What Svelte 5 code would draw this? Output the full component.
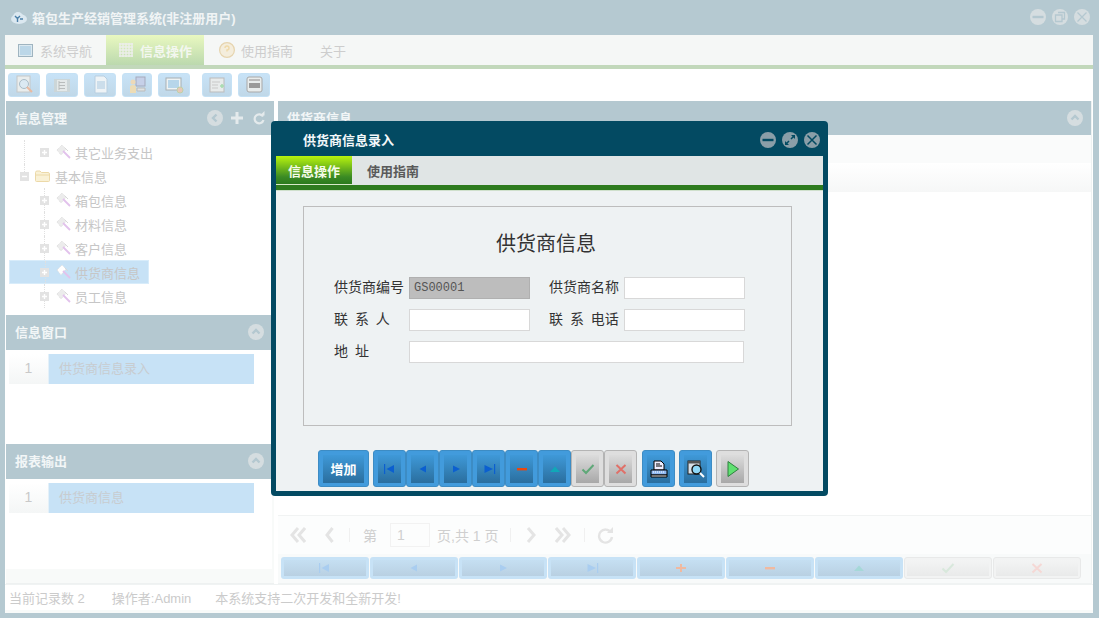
<script>
  const fullTree = [
    { label: '其它业务支出', level: 2, guide: true },
    { label: '基本信息', level: 1, folder: true },
    { label: '箱包信息', level: 2 },
    { label: '材料信息', level: 2 },
    { label: '客户信息', level: 2 },
    { label: '供货商信息', level: 2, selected: true },
    { label: '员工信息', level: 2 }
  ];
  const pageBtns = [
    { k: 'first', c: '#a9cdf0' }, { k: 'prev', c: '#a9cdf0' }, { k: 'next', c: '#a9cdf0' }, { k: 'last', c: '#a9cdf0' },
    { k: 'add', c: '#f0b9a0' }, { k: 'minus', c: '#f0b9a0' }, { k: 'up', c: '#a5d8d8' },
    { k: 'ok', c: '#d8e8dc', off: true }, { k: 'no', c: '#f5d8d5', off: true }
  ];
  const navBtns = [
    { k: 'first', c: '#0b5fd0' }, { k: 'prev', c: '#0b5fd0' }, { k: 'next', c: '#0b5fd0' }, { k: 'last', c: '#0b5fd0' },
    { k: 'minus', c: '#e8480f' }, { k: 'up', c: '#10a8b8' }
  ];
</script>

{#snippet glyph(k, c)}
  <svg class="glyph" width="16" height="14" viewBox="0 0 16 14" aria-hidden="true">
    {#if k === 'first'}
      <rect x="2" y="2" width="1.2" height="10" fill={c}/><path d="M12 3v8L4.5 7z" fill={c}/>
    {:else if k === 'prev'}
      <path d="M11 3.5v7L4.5 7z" fill={c}/>
    {:else if k === 'next'}
      <path d="M5 3.5v7L12 7z" fill={c}/>
    {:else if k === 'last'}
      <rect x="13" y="2" width="1.2" height="10" fill={c}/><path d="M3.5 3v8L12 7z" fill={c}/>
    {:else if k === 'add'}
      <path d="M3 6h10v2H3zM7 3h2v8H7z" fill={c}/>
    {:else if k === 'minus'}
      <rect x="3" y="6" width="10" height="2.4" fill={c}/>
    {:else if k === 'up'}
      <path d="M3 10 8 4.5 13 10z" fill={c}/>
    {:else if k === 'ok'}
      <path d="M2.5 7.5 6 11 13.5 3" fill="none" stroke={c} stroke-width="2"/>
    {:else if k === 'no'}
      <path d="M3.5 3 12.5 11.5M12.5 3 3.5 11.5" fill="none" stroke={c} stroke-width="2"/>
    {/if}
  </svg>
{/snippet}

{#snippet chev()}
  <svg width="16" height="16" viewBox="0 0 16 16" aria-hidden="true"><circle cx="8" cy="8" r="8" fill="#d5dde0"/><path d="M4.500 9.500 8 6l3.500 3.500" fill="none" stroke="#b4c8d0" stroke-width="2.4"/></svg>
{/snippet}

{#snippet toolbarIcon(n)}
  <svg width="22" height="20" viewBox="0 0 22 20" aria-hidden="true">
    {#if n === 0}
      <rect x="4" y="1" width="13" height="16" fill="#e9eded" stroke="#c5c8c8"/><circle cx="11" cy="9" r="4.500" fill="#dbe9f2" stroke="#a9bcc8"/><path d="M14 12l5 5" stroke="#e9b9a0" stroke-width="2"/>
    {:else if n === 1}
      <rect x="3" y="4" width="16" height="13" fill="#ccd6d8"/><rect x="6" y="5" width="10" height="11" fill="#e4e9e9"/><path d="M8 7.500h6M8 10.500h6M8 13.500h6M8 6v9" stroke="#b8bcbc"/>
    {:else if n === 2}
      <path d="M6 1h9l3 3v14H6z" fill="#eef3f6" stroke="#b9cfe0"/><path d="M8 7h8M8 9h8M8 11h8M8 13h8" stroke="#a9c8e0"/>
    {:else if n === 3}
      <rect x="10" y="2" width="9" height="9" fill="#c6d0e8" stroke="#a5aabc"/><circle cx="7" cy="7" r="2.500" fill="#edd9b8"/><path d="M4 18v-6q0-2 3-2t3 2v6z" fill="#eddcb5"/><path d="M11 13h8v3h-8z" fill="#dfe3e3" stroke="#bbb"/>
    {:else if n === 4}
      <rect x="3" y="3" width="15" height="12" fill="#eef3f4" stroke="#a8b0b4"/><rect x="5" y="5" width="11" height="8" fill="#b7d6ea"/><circle cx="17" cy="15" r="3" fill="#e7c8b8" stroke="#c0d0a8"/>
    {:else if n === 5}
      <rect x="4" y="3" width="14" height="14" fill="#e8ebeb" stroke="#bbb"/><path d="M6 7h8M6 10h6M6 13h6" stroke="#c9c9c9"/><path d="M14 11h4M16 9v4" stroke="#a8dcb0" stroke-width="1.6"/>
    {:else}
      <rect x="4" y="2" width="15" height="15" rx="2" fill="#e8ecec" stroke="#a8a8a8"/><rect x="6" y="8" width="11" height="5" fill="#9a9a9a"/><path d="M6 5h11" stroke="#bbb" stroke-width="2"/>
    {/if}
  </svg>
{/snippet}

<div class="win">
  <header class="titlebar">
    <svg class="logo" width="18" height="14" viewBox="0 0 18 14" aria-hidden="true"><ellipse cx="9" cy="8" rx="8" ry="5" fill="#dbe8f0"/><circle cx="8" cy="6" r="5" fill="#dbe8f0"/><path d="M5 5l2.5 2.5L10 5M7.5 7.5V11M10 8h3" stroke="#4a7fa8" stroke-width="1.4" fill="none"/></svg>
    <span class="apptitle">箱包生产经销管理系统(非注册用户)</span>
    <div class="winctl">
      <svg width="16" height="16" viewBox="0 0 16 16" aria-hidden="true"><circle cx="8" cy="8" r="8" fill="#d5dde0"/><rect x="2.5" y="6.8" width="11" height="2.4" fill="#b4c8d0"/></svg>
      <svg width="16" height="16" viewBox="0 0 16 16" aria-hidden="true"><circle cx="8" cy="8" r="8" fill="#d5dde0"/><path d="M6 3.5h6.5V10H10M3.5 6H10v6.5H3.5z" fill="none" stroke="#b4c8d0" stroke-width="1.3"/></svg>
      <svg width="16" height="16" viewBox="0 0 16 16" aria-hidden="true"><circle cx="8" cy="8" r="8" fill="#d5dde0"/><path d="M3.5 3.5l9 9M12.5 3.5l-9 9" stroke="#b4c8d0" stroke-width="1.3"/></svg>
    </div>
  </header>

  <div class="client">
    <nav class="tabs">
      <div class="tab t1">
        <svg width="15" height="13" viewBox="0 0 15 13" aria-hidden="true"><rect x=".5" y=".5" width="14" height="12" fill="#dce9f0" stroke="#9fb4c0"/><rect x="2" y="2" width="11" height="9" fill="#bcd7e8"/></svg>
        系统导航
      </div>
      <div class="tab active">
        <svg width="14" height="14" viewBox="0 0 14 14" aria-hidden="true"><path d="M0 1h14M0 4h14M0 7h14M0 10h14M0 13h14M1 0v14M4 0v14M7 0v14M10 0v14M13 0v14" stroke="#eceeea" stroke-width="1.4"/></svg>
        信息操作
      </div>
      <div class="tab t3">
        <svg width="16" height="16" viewBox="0 0 16 16" aria-hidden="true"><circle cx="8" cy="8" r="7.4" fill="#f4eddc" stroke="#e6d4ae" stroke-width="1.2"/><path d="M6 6q0-2 2-2t2 2-2 2v1.5" fill="none" stroke="#efd9a8" stroke-width="1.4"/></svg>
        使用指南
      </div>
      <div class="tab t4">关于</div>
    </nav>
    <div class="greenline"></div>
    <div class="toolbar">
      {#each [32, 32, 32, 30, 32] as w, i}
        <button class="tool" style="width:{w}px">{@render toolbarIcon(i)}</button>
      {/each}
      <div class="tsep"></div>
      {#each [30, 32] as w, i}
        <button class="tool" style="width:{w}px">{@render toolbarIcon(i + 5)}</button>
      {/each}
    </div>

    <div class="main">
      <aside class="left">
        <section class="panelhead">
          <span>信息管理</span>
          <div class="headicons">
            <svg width="16" height="16" viewBox="0 0 16 16" aria-hidden="true"><circle cx="8" cy="8" r="8" fill="#d5dde0"/><path d="M9.5 4.5 6 8l3.5 3.5" fill="none" stroke="#b4c8d0" stroke-width="2.4"/></svg>
            <svg width="12" height="12" viewBox="0 0 12 12" aria-hidden="true"><path d="M0 6h12M6 0v12" stroke="#e4eaec" stroke-width="3"/></svg>
            <svg class="refresh" width="12" height="14" viewBox="0 0 12 14" aria-hidden="true"><path d="M10 5.5A4.5 4.5 0 1 0 10.5 9" fill="none" stroke="#e4eaec" stroke-width="2.2"/><path d="M7 4.5h4.5V0z" fill="#e4eaec"/></svg>
          </div>
        </section>
        <div class="tree">
          {#each fullTree as n}
            <div class="row" class:l1={n.level === 1} class:l2={n.level === 2} class:sel={n.selected}>
              <span class="toggle">
                <svg width="9" height="9" viewBox="0 0 9 9" aria-hidden="true"><rect width="9" height="9" fill="#e3e3e3"/><path d={n.folder ? 'M2 4.5h5' : 'M2 4.5h5M4.5 2v5'} stroke="#fff" stroke-width="1.4"/></svg>
              </span>
              {#if n.folder}
                <svg class="ti" width="15" height="12" viewBox="0 0 15 12" aria-hidden="true"><path d="M.5 2.5Q.5 1 2 1h3l1.500 1.500H13q1.500 0 1.500 1.500v6.500q0 1-1 1h-12q-1 0-1-1z" fill="#f9f1d6" stroke="#ecd9a8"/><path d="M1 5h13" stroke="#ecd9a8"/></svg>
              {:else}
                <svg class="ti" width="15" height="14" viewBox="0 0 15 14" aria-hidden="true"><path d="M1 5 6 0l4 4-5 6z" fill={n.selected ? '#fff' : '#ececec'} stroke="#dedede" stroke-dasharray="1 1"/><path d="M7 6l7 7" stroke="#e2c2ec" stroke-width="1.8"/><path d="M9 3l3 3" stroke="#d8d8d8"/></svg>
              {/if}
              <span class="tlabel">{n.label}</span>
            </div>
          {/each}
        </div>
        <section class="panelhead tall">
          <span>信息窗口</span>
          {@render chev()}
        </section>
        <div class="listbody b1">
          <div class="li"><span class="num">1</span><span class="lit">供货商信息录入</span></div>
        </div>
        <section class="panelhead tall">
          <span>报表输出</span>
          {@render chev()}
        </section>
        <div class="listbody b2">
          <div class="li"><span class="num">1</span><span class="lit">供货商信息</span></div>
        </div>
        <div class="leftfoot"></div>
      </aside>

      <section class="right">
        <section class="panelhead r">
          <span>供货商信息</span>
          {@render chev()}
        </section>
        <div class="rtool"></div>
        <div class="gridhead"></div>
        <div class="gridbody"></div>
        <div class="pager">
          <svg width="16" height="18" viewBox="0 0 16 18" aria-hidden="true"><path d="M8 2 2 9l6 7M15 2 9 9l6 7" fill="none" stroke="#e4e4e4" stroke-width="3"/></svg>
          <svg class="pg2" width="9" height="18" viewBox="0 0 9 18" aria-hidden="true"><path d="M7.500 2 2 9l5.500 7" fill="none" stroke="#e4e4e4" stroke-width="3"/></svg>
          <i class="psep s1"></i>
          <span class="ptx first">第</span>
          <span class="pinput">1</span>
          <span class="ptx">页,共 1 页</span>
          <i class="psep s2"></i>
          <svg class="pg3" width="10" height="18" viewBox="0 0 10 18" aria-hidden="true"><path d="M2 2l6 7-6 7" fill="none" stroke="#e4e4e4" stroke-width="3"/></svg>
          <svg class="pg4" width="16" height="18" viewBox="0 0 16 18" aria-hidden="true"><path d="M1 2l6 7-6 7M8 2l6 7-6 7" fill="none" stroke="#e4e4e4" stroke-width="3"/></svg>
          <i class="psep s3"></i>
          <svg class="pg5" width="17" height="17" viewBox="0 0 17 17" aria-hidden="true"><path d="M14 5.500A6.500 6.500 0 1 0 15 10" fill="none" stroke="#e4e4e4" stroke-width="2.4"/><path d="M10 6h6V0z" fill="#e4e4e4"/></svg>
        </div>
        <div class="pagebtns">
          {#each pageBtns as b}
            <button class="pbtn" class:off={b.off}><span>{@render glyph(b.k, b.c)}</span></button>
          {/each}
        </div>
      </section>
    </div>

    <footer class="status">
      <span>当前记录数 2</span>
      <span>操作者:Admin</span>
      <span class="slogan">本系统支持二次开发和全新开发!</span>
    </footer>
  </div>

  <div class="dialog">
    <div class="dhead">
      <span class="dtitle">供货商信息录入</span>
      <div class="dctl">
        <svg width="16" height="16" viewBox="0 0 16 16" aria-hidden="true"><circle cx="8" cy="8" r="8" fill="#8a9ea8"/><rect x="2.500" y="6.800" width="11" height="2.400" fill="#034a62"/></svg>
        <svg width="16" height="16" viewBox="0 0 16 16" aria-hidden="true"><circle cx="8" cy="8" r="8" fill="#8a9ea8"/><path d="M9 7l3.500-3.500M7 9l-3.500 3.500" stroke="#034a62" stroke-width="1.500"/><path d="M9 3h4v4zM7 13H3V9z" fill="#034a62"/></svg>
        <svg width="16" height="16" viewBox="0 0 16 16" aria-hidden="true"><circle cx="8" cy="8" r="8" fill="#8a9ea8"/><path d="M3.500 3.500l9 9M12.500 3.500l-9 9" stroke="#034a62" stroke-width="1.500"/></svg>
      </div>
    </div>
    <div class="dbody">
      <div class="dtabs">
        <div class="dtab on">信息操作</div>
        <div class="dtab second">使用指南</div>
      </div>
      <div class="dcontent">
        <div class="formbox">
          <h2>供货商信息</h2>
          <div class="formgrid">
            <label class="lab" for="f1">供货商编号</label>
            <input id="f1" class="inp ro" value="GS00001" readonly />
            <label class="lab l2nd" for="f2">供货商名称</label>
            <input id="f2" class="inp" />
            <label class="lab sp" for="f3">联 系 人</label>
            <input id="f3" class="inp" />
            <label class="lab l2nd sp" for="f4">联 系 电话</label>
            <input id="f4" class="inp" />
            <label class="lab sp" for="f5">地 址</label>
            <input id="f5" class="inp wide" />
          </div>
        </div>
        <div class="actions">
          <button class="abtn add"><span>增加</span></button>
          <div class="agroup">
            {#each navBtns as b}
              <button class="abtn"><span>{@render glyph(b.k, b.c)}</span></button>
            {/each}
            <button class="abtn gray"><span>{@render glyph('ok', '#5fa878')}</span></button>
            <button class="abtn gray"><span>{@render glyph('no', '#e07068')}</span></button>
          </div>
          <button class="abtn printb"><span>
            <svg width="18" height="18" viewBox="0 0 18 18" aria-hidden="true"><path d="M4 1h7l3 3v6H4z" fill="#eef" stroke="#000"/><path d="M6 4h4M6 6h6" stroke="#000"/><path d="M1 10h16v5H1z" fill="#8fb8f0" stroke="#000"/><path d="M3 12h12" stroke="#fff" stroke-dasharray="1 1"/><path d="M1 15h16v2H1z" fill="#e5e5e5" stroke="#000"/></svg>
          </span></button>
          <button class="abtn"><span>
            <svg width="18" height="18" viewBox="0 0 18 18" aria-hidden="true"><rect x="1" y="1" width="12" height="13" fill="#d8e0e8" stroke="#222"/><rect x="1" y="1" width="12" height="2.500" fill="#555"/><circle cx="9.500" cy="9.500" r="4.500" fill="#8fd8f8" stroke="#111" stroke-width="1.400"/><path d="M13 13l4 4" stroke="#fff" stroke-width="2"/></svg>
          </span></button>
          <button class="abtn gray"><span>
            <svg width="14" height="18" viewBox="0 0 14 18" aria-hidden="true"><path d="M2 1.500v15L12.500 9z" fill="#5fe070" stroke="#2f7f3f"/></svg>
          </span></button>
        </div>
      </div>
    </div>
  </div>
</div>

<style>
  :global(body) { margin: 0; background: #fff; }
  * { box-sizing: border-box; }
  .win {
    position: relative;
    width: 1099px;
    height: 618px;
    display: flex;
    flex-direction: column;
    background: #b5c9d1;
    padding: 0 6px 5px 5px;
    font: 13px "Liberation Sans", "Noto Sans CJK SC", sans-serif;
    color: #c8c8c8;
    overflow: hidden;
  }
  .titlebar { height: 35px; flex: none; display: flex; align-items: center; padding-left: 5px; }
  .logo { margin-right: 4px; }
  .apptitle { font-weight: 700; color: #f0f4f5; }
  .winctl { margin-left: auto; display: flex; gap: 6px; margin-right: 3px; margin-top: -1px; }

  .client { flex: 1; min-height: 0; display: flex; flex-direction: column; background: #fff; }
  .tabs { height: 30px; flex: none; display: flex; background: #f5f7f6; color: #cdcdcd; }
  .tab { display: flex; align-items: center; gap: 7px; height: 30px; }
  .t1 { width: 101px; padding-left: 13px; }
  .active { width: 98px; padding-left: 13px; gap: 7px; font-weight: 700; color: #f3f7ef; background: linear-gradient(#e9f8c0, #bcd9ae); }
  .t3 { width: 116px; padding-left: 15px; gap: 6px; }
  .t4 { padding-left: 0; }
  .greenline { height: 4px; flex: none; background: #c2d8bb; }
  .toolbar { height: 32px; flex: none; display: flex; align-items: center; gap: 6px; padding: 0 0 0 3px; }
  .tsep { width: 0; }
  .tool {
    height: 24px; padding: 0; border: 1px solid #c5e1f5; border-radius: 3px;
    background: linear-gradient(#c8e3f7, #c0d8e8);
    display: flex; align-items: center; justify-content: center;
  }

  .main { flex: 1; min-height: 0; display: flex; }
  .left { width: 268px; flex: none; display: flex; flex-direction: column; background: #f8faf9; margin-left: 1px; }
  .panelhead {
    flex: none; height: 34px; display: flex; align-items: center; justify-content: space-between;
    background: #b4c8d0; color: #f2f6f7; font-weight: 700; padding: 0 11px 0 9px;
  }
  .panelhead > span { margin-top: -2px; }
  .panelhead > svg { margin-top: -1px; }
  .panelhead.tall { height: 35px; padding-right: 10px; }
  .left .panelhead:first-child { padding-right: 9px; }
  .headicons { display: flex; align-items: center; gap: 8px; margin-top: -1px; }
  .refresh { margin-left: 2px; }
  .tree { height: 180px; flex: none; background: #fff; padding: 5px 0 0 3px; position: relative; }
  .row { height: 24px; display: flex; align-items: center; width: 140px; position: relative; white-space: nowrap; }
  .row.l1 { padding-left: 11px; }
  .row.l2 { padding-left: 31px; }
  .row::before {
    content: ""; position: absolute; top: 0; bottom: 0; border-left: 1px dotted #e0e0e0;
  }
  .row.l1::before { left: 15px; bottom: 12px; }
  .row.l2::before { left: 35px; }
  .row:first-child::before { left: 15px; }
  .row.sel { background: #c7e2f6; border: 1px solid #d8ecfa; padding-left: 30px; }
  .toggle { width: 9px; height: 9px; flex: none; display: flex; position: relative; z-index: 1; }
  .ti { flex: none; margin-left: 7px; }
  .row.l1 .ti { margin-left: 6px; }
  .tlabel { margin-left: 4px; color: #c6c6c6; }
  .row.l1 .tlabel { margin-left: 5px; }

  .listbody { flex: none; background: #fff; padding: 4px 0 0 3px; margin-right: 2px; }
  .b1 { height: 94px; }
  .b2 { height: 90px; }
  .li { display: flex; height: 30px; width: 245px; }
  .num { width: 40px; display: flex; align-items: center; justify-content: center; background: linear-gradient(#fff, #f4f6f6); color: #c9c9c9; font-size: 14px; border-right: 1px solid #e4f0f8; padding-bottom: 3px; }
  .lit { flex: 1; background: #c7e2f6; color: #c8ccd0; padding: 0 0 4px 10px; display: flex; align-items: center; }
  .leftfoot { flex: 1; border-bottom: 1px solid #eef1f1; }

  .right { margin-left: 4px; width: 814px; flex: none; display: flex; flex-direction: column; background: #fff; border-right: 1px solid #eef2f2; }
  .panelhead.r { padding: 0 8px 0 9px; }
  .rtool { height: 28px; flex: none; background: #fafbfb; }
  .gridhead { height: 29px; flex: none; background: linear-gradient(#fff, #f6f7f7); }
  .gridbody { flex: 1; background: #fff; border-bottom: 1px solid #f1f3f3; }
  .pager { height: 38px; flex: none; display: flex; align-items: center; padding-left: 12px; background: #fcfdfd; position: relative; }
  .pg2 { margin-left: 19px; }
  .psep { width: 1px; height: 14px; background: #f0f0f0; display: block; }
  .s1 { margin-left: 15px; }
  .ptx { color: #cfcfcf; font-size: 14px; }
  .first { margin-left: 13px; }
  .pinput { width: 40px; height: 24px; margin: 0 7px 0 13px; border: 1px solid #f2f2f2; color: #d0d0d0; padding-left: 6px; font-size: 14px; display: flex; align-items: center; }
  .s2 { margin-left: 12px; }
  .pg3 { margin-left: 15px; }
  .pg4 { margin-left: 19px; }
  .s3 { margin-left: 13px; }
  .pg5 { margin-left: 12px; }
  .pagebtns { height: 30px; flex: none; display: flex; gap: 1px; padding: 3px 0 0 3px; background: #f8fafa; border-bottom: 1px solid #f0f3f3; }
  .pbtn {
    width: 88px; height: 22px; padding: 3px; border: 0; border-radius: 3px; background: #c7e2f6;
  }
  .pbtn span { display: flex; width: 100%; height: 100%; align-items: center; justify-content: center; background: linear-gradient(#c5dff2, #b9d0e2); }
  .pbtn.off { background: #f2f3f3; border: 1px solid #e8e9e9; padding: 2px; }
  .pbtn.off span { background: linear-gradient(#f3f4f4, #e9eaea); }

  .status { height: 29px; flex: none; display: flex; gap: 27px; align-items: center; padding: 0 0 3px 4px; background: #fff; color: #cbcbcb; border-top: 1px solid #f0f3f3; box-shadow: inset 0 -3px 0 #f8faf9; }
  .slogan { margin-left: -3px; }

  .dialog {
    position: absolute; left: 271px; top: 121px; width: 557px; height: 375px;
    background: #034a62; border-radius: 4px; padding: 0 5px 5px; display: flex; flex-direction: column;
  }
  .dhead { height: 35px; flex: none; display: flex; align-items: center; padding-left: 27px; color: #fff; font-weight: 700; }
  .dtitle { margin-top: 2px; color: #f3f8fa; }
  .dctl { margin-left: auto; display: flex; gap: 6px; margin-right: 3px; margin-top: 2px; }
  .dbody { flex: 1; min-height: 0; display: flex; flex-direction: column; background: #eef2f3; }
  .dtabs { height: 34px; flex: none; display: flex; background: #e0e5e5; border-bottom: 5px solid #2e7b1e; box-shadow: 0 1px 0 #cfe0cc; color: #555; font-weight: 700; font-size: 13px; }
  .dtab { width: 76px; display: flex; align-items: center; justify-content: center; color: #5a5a5a; }
  .dtab.second { margin-left: 3px; }
  .dtab.on { color: #f5fbe8; background: linear-gradient(#b8f40e, #3a8a24 75%, #2b7a1c); border-bottom: 1px solid #d8e8c8; }
  .dcontent { flex: 1; min-height: 0; display: flex; flex-direction: column; padding: 16px 0 0 27px; }
  .formbox { width: 489px; height: 220px; flex: none; border: 1px solid #bdbdbd; padding: 23px 0 0 30px; background: #eef2f3; }
  h2 { margin: 0 3px 18px -30px; text-align: center; font-weight: 400; font-size: 20px; line-height: 29px; color: #333; }
  .formgrid { display: grid; column-gap: 0; grid-template-columns: 75px 121px 94px 121px; grid-auto-rows: 22px; row-gap: 10px; }
  .lab { font-size: 14px; color: #333; line-height: 21px; white-space: pre; }
  .l2nd { margin-left: 19px; width: 75px; }
  .sp { word-spacing: 3px; }
  .inp { height: 22px; width: 100%; border: 1px solid #d8d8d8; background: #fff; padding: 0 0 0 4px; font: 12px "Liberation Mono", monospace; color: #555; outline: none; border-radius: 0; }
  .ro { background: #bdbdbd; border-color: #b0b0b0; }
  .wide { grid-column: 2 / 5; width: 335px; }

  .actions { display: flex; gap: 4px; padding: 24px 0 0 15px; }
  .agroup { display: flex; }
  .abtn {
    width: 33px; height: 37px; padding: 4px 4px 3px; border: 1px solid #3d8cc4; border-radius: 3px; background: #429bdc; display: block;
  }
  .abtn > span { display: flex; align-items: center; justify-content: center; width: 100%; height: 100%; background: linear-gradient(#3f99d8, #2a6e9e); color: #fff; font: 700 13px "Liberation Sans", "Noto Sans CJK SC", sans-serif; padding-bottom: 1px; }
  .add { width: 51px; }
  .printb { margin-left: 1px; }
  .gray { border-color: #b4b4b4; background: #dedede; }
  .gray > span { background: linear-gradient(#dcdcdc, #a8a8a8); }
</style>
